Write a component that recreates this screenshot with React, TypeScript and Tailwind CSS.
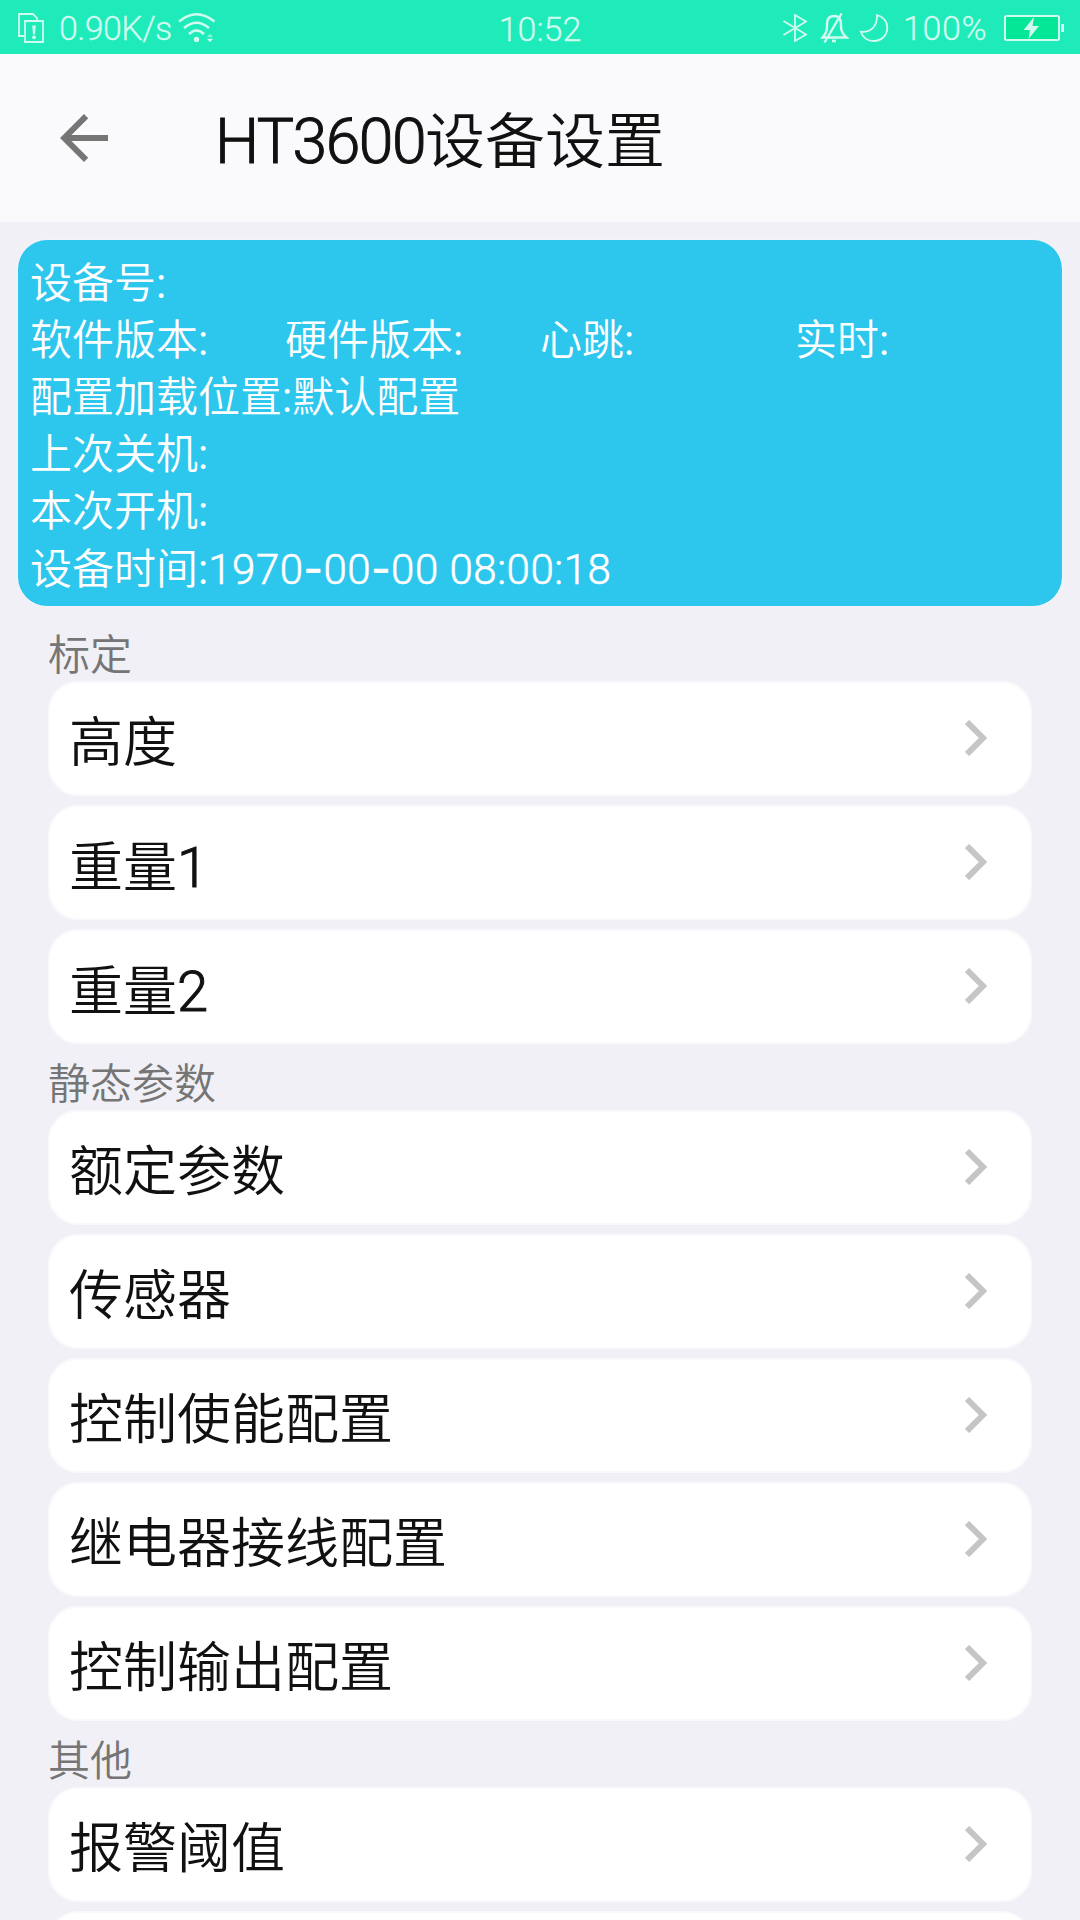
import { ReactNode } from 'react';

const sections = [
  { title: '标定', items: ['高度', '重量1', '重量2'] },
  {
    title: '静态参数',
    items: ['额定参数', '传感器', '控制使能配置', '继电器接线配置', '控制输出配置'],
  },
  { title: '其他', items: ['报警阈值', ''] },
];

// Latin letters and digits are set a little larger and heavier than the Chinese text
function Mixed({ text }: { text: string }) {
  return (
    <>
      {text.split(/([A-Za-z0-9]+)/).map((part, i) =>
        i % 2 ? (
          <span key={i} className="text-[1.04em] tracking-[-0.024em] [-webkit-text-stroke:1px_currentColor]">
            {part}
          </span>
        ) : (
          part
        )
      )}
    </>
  );
}

function StatusBar() {
  return (
    <div className="grid h-[54px] shrink-0 grid-cols-3 items-center bg-[#1eebb9] text-[34px] leading-[54px] text-[#d2fbf0]">
      <div className="flex items-center pl-[17px]">
        {/* SIM warning */}
        <svg width="28" height="54" viewBox="17 0 28 54" fill="none" stroke="currentColor" strokeWidth="1.8">
          <path d="M24 35h-5V13h14l4 4v3" />
          <path d="M25 20h18v21H25z" />
          <path d="M32.2 24.5h3.6l-.8 9h-2z" fill="currentColor" stroke="none" />
          <circle cx="34" cy="36.3" r="1.9" fill="currentColor" stroke="none" />
        </svg>
        <span className="ml-[14px] w-[118px] whitespace-nowrap tracking-[-0.6px] [-webkit-text-stroke:0.3px_currentColor]">
          0.90K/s
        </span>
        {/* Wifi with traffic arrows */}
        <svg width="40" height="54" viewBox="177 0 40 54" fill="none" stroke="currentColor" strokeWidth="2.6">
          <path d="M179 20.5q17.5-14.5 35.5 0" />
          <path d="M184 27q12.5-10.5 25 0" />
          <path d="M189 33q7.5-7 15 0" />
          <circle cx="196.5" cy="38.5" r="2.7" fill="currentColor" stroke="none" />
          <path d="M207 36l3-3.2 3 3.2z" fill="currentColor" stroke="none" opacity="0.6" />
          <path d="M207 37.8h6l-3 3.4z" fill="currentColor" stroke="none" />
        </svg>
      </div>

      <div className="pt-[2px] text-center [-webkit-text-stroke:0.3px_currentColor]">10:52</div>

      <div className="flex items-center justify-end pr-[15px]">
        <svg width="110" height="54" viewBox="781 0 110 54" fill="none" stroke="currentColor" strokeWidth="1.8">
          {/* Bluetooth */}
          <path d="M783.5 20l22.5 13.5-11 6.5V14l11 6.5-22.5 13.5" />
          {/* Muted bell */}
          <path d="M822.5 36.5q4.5-5 4.5-10.5v-3c0-5 2.5-8 7-8s7 3 7 8v3q0 5.5 5.5 10.5z" strokeWidth="2.4" />
          <path d="M841.5 12.5l-17 29" strokeWidth="2.4" />
          <path d="M832 40h4" strokeWidth="2.6" />
          {/* Moon */}
          <path d="M877 14.2c6 1.3 10.3 6 10.3 12.3 0 8-6 13.5-13.5 13.5-6.3 0-11-3.5-13-9.3 9.7 1 16.7-5 16.2-16.5z" />
        </svg>
        <span className="ml-[12px] w-[101px] tracking-[0.6px] [-webkit-text-stroke:0.3px_currentColor]">100%</span>
        {/* Charging battery */}
        <svg width="61" height="54" viewBox="1004 0 61 54">
          <rect x="1005" y="15" width="54" height="24" rx="1.5" fill="#04e796" stroke="currentColor" strokeWidth="2" />
          <rect x="1061" y="23" width="3" height="8" fill="currentColor" />
          <path d="M1034 16l-10.5 13h6.5l-1.5 9 10.5-13h-6.5z" fill="currentColor" />
        </svg>
      </div>
    </div>
  );
}

function InfoLine({ children }: { children: ReactNode }) {
  return <div className="h-[57px] whitespace-nowrap">{children}</div>;
}

function Dash() {
  return <span className="font-['Inter'] font-normal">-</span>;
}

function DeviceInfo() {
  return (
    <div className="mx-[18px] mt-[18px] h-[366px] shrink-0 rounded-[29px] bg-[#2dc6ed] px-[12px] pt-[15px] text-[42px] leading-[57px] text-white shadow-[0_0_2px_#ffffff]">
      <InfoLine>设备号<b className="font-normal">:</b></InfoLine>
      <div className="grid h-[57px] grid-cols-4">
        <span>软件版本<b className="font-normal">:</b></span>
        <span>硬件版本<b className="font-normal">:</b></span>
        <span>心跳<b className="font-normal">:</b></span>
        <span>实时<b className="font-normal">:</b></span>
      </div>
      <InfoLine>配置加载位置<b className="font-normal">:</b>默认配置</InfoLine>
      <InfoLine>上次关机<b className="font-normal">:</b></InfoLine>
      <InfoLine>本次开机<b className="font-normal">:</b></InfoLine>
      <InfoLine>
        设备时间<b className="font-normal">:</b>
        <span className="tracking-[0.55px] [-webkit-text-stroke:0.6px_currentColor]">
          1970<Dash />00<Dash />00 08:00:18
        </span>
      </InfoLine>
    </div>
  );
}

function SettingRow({ label }: { label: string }) {
  return (
    <button className="mb-[9px] flex h-[115px] w-full shrink-0 items-center justify-between rounded-[30px] border-2 border-[#f9fafb] bg-white pl-[19px] pr-[43px] text-left text-[54px] leading-[80px] text-[#111111]">
      <span className="pt-[11px]">
        <Mixed text={label} />
      </span>
      <svg className="mb-[2px]" width="22" height="36" viewBox="0 0 22 36" fill="none" stroke="#c5c5c5" strokeWidth="6">
        <path d="M2 2l16 16L2 34" />
      </svg>
    </button>
  );
}

export default function App() {
  return (
    <div className="flex h-[1920px] w-[1080px] flex-col overflow-hidden bg-[#f1f0f6] font-['Roboto','Noto_Sans_CJK_SC',sans-serif] font-[350]">
      <StatusBar />

      <header className="flex h-[168px] shrink-0 items-center bg-[#fafafd] pl-[48px]">
        <svg width="72" height="72" viewBox="0 0 24 24" fill="#757575">
          <path d="M20 11H7.83l5.59-5.59L12 4l-8 8 8 8 1.41-1.41L7.83 13H20v-2z" />
        </svg>
        <h1 className="ml-[95px] pt-[9px] text-[60px] leading-[80px] text-[#111111]">
          <Mixed text="HT3600设备设置" />
        </h1>
      </header>

      <DeviceInfo />

      <div className="mt-[18px] flex flex-col px-[48px]">
        {sections.map((section) => (
          <section key={section.title}>
            <h2 className="h-[57px] text-[42px] leading-[64px] text-[#757575]">{section.title}</h2>
            {section.items.map((item) => (
              <SettingRow key={item} label={item} />
            ))}
          </section>
        ))}
      </div>
    </div>
  );
}
